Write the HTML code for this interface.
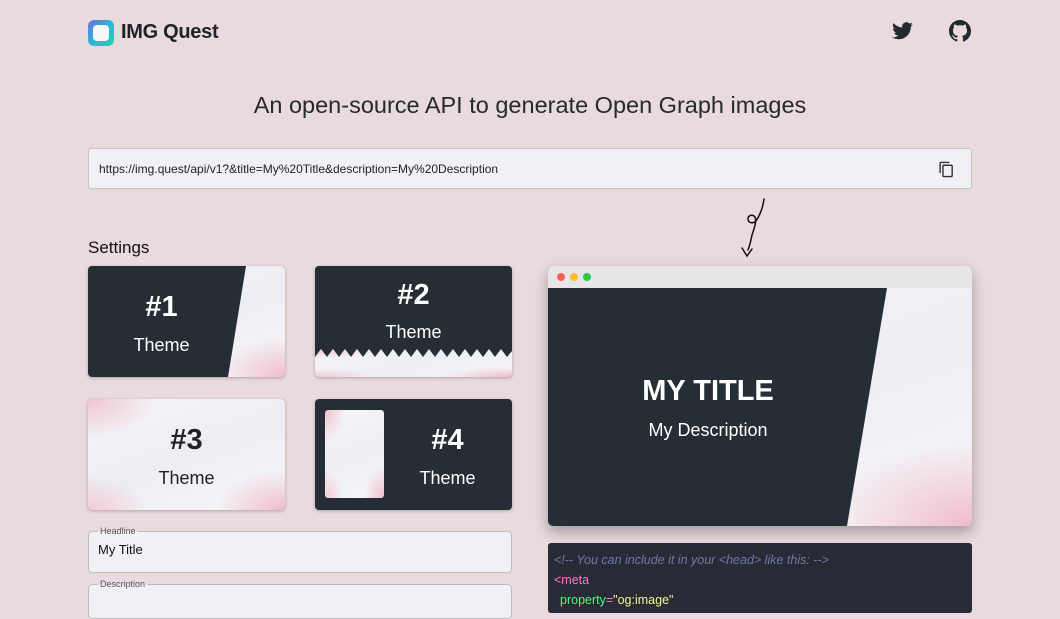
<!DOCTYPE html>
<html><head><meta charset="utf-8"><style>
*{box-sizing:border-box;margin:0;padding:0}
body{width:1060px;height:600px;overflow:hidden;background:#e9dadd;font-family:"Liberation Sans",sans-serif;position:relative;color:#1f2328}
.a{position:absolute}
.card{border-radius:4px;overflow:hidden;box-shadow:0 1px 3px rgba(0,0,0,.25);background:#262e35}
.pat{background:radial-gradient(ellipse at 0% 0%,#f1c3cf 0,transparent 25%),radial-gradient(ellipse at 100% 100%,#f0bccb 0,transparent 25%),radial-gradient(ellipse at 0% 100%,#f3cbd6 0,transparent 22%),linear-gradient(160deg,#f6f5f8,#eceef3 50%,#f7f6f9)}
.t{color:#fff;text-align:center;position:absolute}
.h{font-weight:bold;font-size:29px}
.s{font-size:18px}
fieldset{position:absolute;border:1px solid #bfbcc0;border-radius:4px;background:#eff1f4;padding:0 9px}
legend{font-size:9px;color:#555;padding:0 2px;background:linear-gradient(#e9dadd 55%,#eff1f4 55%)}
</style></head><body>
<div class="a" style="left:88px;top:20px;width:26px;height:26px;border-radius:6px;background:linear-gradient(135deg,#6d6fe0,#2bb6d6,#23d3b0)"></div>
<div class="a" style="left:93px;top:25px;width:16px;height:16px;border-radius:4px;background:#f7f7fb"></div>
<div class="a" style="left:121px;top:21px;font-size:20px;font-weight:bold;color:#202329;letter-spacing:-.3px">IMG Quest</div>
<svg class="a" style="left:892px;top:22px" width="21" height="18" viewBox="0 0 24 20"><path fill="#242a30" d="M24 2.4a9.8 9.8 0 0 1-2.8.8A4.9 4.9 0 0 0 23.3.4a9.900 9.900 0 0 1-3.1 1.2A4.9 4.9 0 0 0 11.8 6 14 14 0 0 1 1.7.9a4.9 4.9 0 0 0 1.5 6.6A4.9 4.9 0 0 1 1 6.9a4.9 4.9 0 0 0 3.9 4.8 4.9 4.9 0 0 1-2.2.1 4.9 4.9 0 0 0 4.6 3.4A9.9 9.9 0 0 1 0 17.2 14 14 0 0 0 7.5 19.4c9.1 0 14-7.5 14-14v-.6A10 10 0 0 0 24 2.4z"/></svg>
<svg class="a" style="left:949px;top:20px" width="22" height="22" viewBox="0 0 16 16"><path fill="#242a30" d="M8 0C3.6 0 0 3.6 0 8c0 3.5 2.3 6.5 5.5 7.6.4.1.5-.2.5-.4v-1.4c-2.2.5-2.700-1-2.700-1-.4-.9-.9-1.2-.9-1.2-.7-.5.1-.5.1-.5.8.1 1.2.8 1.2.8.7 1.2 1.9.9 2.3.7.1-.5.3-.9.5-1.1-1.8-.2-3.6-.9-3.6-4 0-.9.3-1.6.8-2.1-.1-.2-.4-1 .1-2.1 0 0 .7-.2 2.2.8a7.5 7.5 0 0 1 4 0c1.5-1 2.2-.8 2.2-.8.4 1.1.2 1.9.1 2.1.5.6.8 1.3.8 2.1 0 3.100-1.9 3.8-3.6 4 .3.3.6.8.6 1.5v2.2c0 .2.1.5.6.4A8 8 0 0 0 16 8c0-4.4-3.6-8-8-8z"/></svg>
<div class="a" style="left:0;width:1060px;top:92px;text-align:center;font-size:23.5px;color:#26292e">An open-source API to generate Open Graph images</div>
<div class="a" style="left:88px;top:148px;width:884px;height:41px;background:#eff1f4;border:1px solid #c8c2c6;border-radius:3px"></div>
<div class="a" style="left:99px;top:162px;font-size:12px;color:#222">https://img.quest/api/v1?&amp;title=My%20Title&amp;description=My%20Description</div>
<svg class="a" style="left:938px;top:160px" width="17" height="19" viewBox="0 0 24 24"><path fill="#333" d="M16 1H4c-1.1 0-2 .9-2 2v14h2V3h12V1zm3 4H8c-1.1 0-2 .9-2 2v14c0 1.1.9 2 2 2h11c1.1 0 2-.9 2-2V7c0-1.100-.9-2-2-2zm0 16H8V7h11v14z"/></svg>
<svg class="a" style="left:730px;top:196px" width="45" height="64" viewBox="0 0 45 64"><path d="M34 3c-1 8-4 16-8 22-3 3-8 2-8-2 0-4 5-5 7-2 2 4-1 12-3 18-1 5-2 10-4 15M12 52l5 8 5-7" fill="none" stroke="#111" stroke-width="1.5" stroke-linecap="round"/></svg>
<div class="a" style="left:88px;top:238px;font-size:17px;color:#111">Settings</div>

<div class="a card" style="left:88px;top:266px;width:197px;height:111px">
 <div class="a pat" style="left:0;top:0;width:100%;height:100%;clip-path:polygon(158px 0,100% 0,100% 100%,140px 100%)"></div>
 <div class="t h" style="left:27px;width:93px;top:25px">#1</div><div class="t s" style="left:27px;width:93px;top:69px">Theme</div>
</div>
<div class="a card" style="left:315px;top:266px;width:197px;height:111px">
 <div class="a pat" style="left:0;top:83px;width:100%;height:28px;clip-path:polygon(0 8px,6px 0,12px 8px,18px 0,24px 8px,30px 0,36px 8px,42px 0,48px 8px,54px 0,60px 8px,66px 0,72px 8px,78px 0,84px 8px,90px 0,96px 8px,102px 0,108px 8px,114px 0,120px 8px,126px 0,132px 8px,138px 0,144px 8px,150px 0,156px 8px,162px 0,168px 8px,174px 0,180px 8px,186px 0,192px 8px,197px 2px,197px 28px,0 28px)"></div>
 <div class="t h" style="left:0;width:100%;top:13px">#2</div><div class="t s" style="left:0;width:100%;top:56px">Theme</div>
</div>
<div class="a card" style="left:88px;top:399px;width:197px;height:111px">
 <div class="a pat" style="left:0;top:0;width:100%;height:100%"></div>
 <div class="t h" style="left:0;width:197px;top:25px;color:#222">#3</div><div class="t s" style="left:0;width:197px;top:69px;color:#222">Theme</div>
</div>
<div class="a card" style="left:315px;top:399px;width:197px;height:111px">
 <div class="a pat" style="left:10px;top:11px;width:59px;height:88px;border-radius:3px"></div>
 <div class="t h" style="left:95px;width:75px;top:25px">#4</div><div class="t s" style="left:95px;width:75px;top:69px">Theme</div>
</div>

<fieldset style="left:88px;top:526px;width:424px;height:47px"><legend>Headline</legend><div style="font-size:13px;margin-top:6px;color:#111">My Title</div></fieldset>
<fieldset style="left:88px;top:579px;width:424px;height:40px"><legend>Description</legend></fieldset>

<div class="a" style="left:548px;top:266px;width:424px;height:260px;border-radius:5px;overflow:hidden;box-shadow:0 6px 14px rgba(0,0,0,.3);background:#262e35">
 <div class="a" style="left:0;top:0;width:100%;height:22px;background:#e8e6e8"></div>
 <div class="a" style="left:9px;top:7px;width:8px;height:8px;border-radius:50%;background:#fe5f57"></div>
 <div class="a" style="left:22px;top:7px;width:8px;height:8px;border-radius:50%;background:#febc2e"></div>
 <div class="a" style="left:35px;top:7px;width:8px;height:8px;border-radius:50%;background:#28c840"></div>
 <div class="a pat" style="left:0;top:22px;width:100%;height:238px;clip-path:polygon(339px 0,100% 0,100% 100%,299px 100%)"></div>
 <div class="t" style="left:60px;width:200px;top:109px;font-size:29px;font-weight:bold">MY TITLE</div>
 <div class="t" style="left:60px;width:200px;top:154px;font-size:18px">My Description</div>
</div>

<div class="a" style="left:548px;top:543px;width:424px;height:70px;background:#282a36;border-radius:3px;font-size:12.5px;padding:7px 6px;line-height:20px">
 <div style="color:#6f79a8;font-style:italic">&lt;!-- You can include it in your &lt;head&gt; like this: --&gt;</div>
 <div style="color:#ff79c6">&lt;meta</div>
 <div style="color:#50fa7b;padding-left:6px">property<span style="color:#ff79c6">=</span><span style="color:#f1fa8c">"og:image"</span></div>
</div>
</body></html>
